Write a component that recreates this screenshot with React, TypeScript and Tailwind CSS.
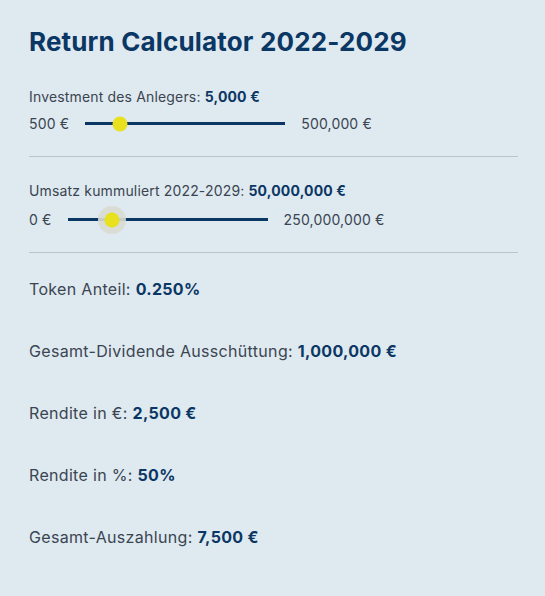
import type { ReactNode } from 'react'

const navy = 'text-[#0b3764]'

function Slider({
  min,
  max,
  trackWidth,
  thumbAt,
  focused,
}: {
  min: string
  max: string
  trackWidth: string
  thumbAt: number
  focused?: boolean
}) {
  return (
    <div className="flex items-center text-[14px] text-[#3a4550]">
      <span>{min}</span>
      <div className={`relative mx-[16px] h-[3px] bg-[#0b3764] ${trackWidth}`}>
        {focused && (
          <span
            className="absolute top-1/2 h-[28px] w-[28px] -translate-x-1/2 -translate-y-1/2 rounded-full bg-[#d8dbd3]/90"
            style={{ left: thumbAt }}
          />
        )}
        <span
          className="absolute top-1/2 h-[15px] w-[15px] -translate-x-1/2 -translate-y-1/2 rounded-full bg-[#e9e11e]"
          style={{ left: thumbAt }}
        />
      </div>
      <span>{max}</span>
    </div>
  )
}

function Result({ label, children }: { label: string; children: ReactNode }) {
  return (
    <p className="text-[16px] leading-[22px] tracking-[0.02em] text-[#3a4550]">
      {label} <b className={`font-bold ${navy}`}>{children}</b>
    </p>
  )
}

export default function App() {
  return (
    <div
      className="min-h-screen bg-[#dfe9f0] pl-[29px] pr-[27px] pt-[24px] tracking-[0.01em]"
      style={{ fontFamily: 'Inter, "Open Sans", sans-serif' }}
    >
      <h1 className={`text-[26px] font-bold leading-[36px] ${navy}`}>Return Calculator 2022-2029</h1>

      <div className="mt-[28px] pb-[22px]">
        <p className="text-[14px] leading-[18px] text-[#3a4550]">
          Investment des Anlegers: <b className={`font-bold ${navy}`}>5,000 €</b>
        </p>
        <div className="mt-[7px]">
          <Slider min="500 €" max="500,000 €" trackWidth="w-[200px]" thumbAt={35} />
        </div>
      </div>
      <hr className="border-[#bcc4ca]" />

      <div className="pt-[25px] pb-[22px]">
        <p className="text-[14px] leading-[18px] text-[#3a4550]">
          Umsatz kummuliert 2022-2029: <b className={`font-bold ${navy}`}>50,000,000 €</b>
        </p>
        <div className="mt-[9px]">
          <Slider min="0 €" max="250,000,000 €" trackWidth="w-[200px]" thumbAt={44} focused />
        </div>
      </div>
      <hr className="border-[#bcc4ca]" />

      <div className="flex flex-col gap-[40px] pt-[25px]">
        <Result label="Token Anteil:">0.250%</Result>
        <Result label="Gesamt-Dividende Ausschüttung:">1,000,000 €</Result>
        <Result label="Rendite in €:">2,500 €</Result>
        <Result label="Rendite in %:">50%</Result>
        <Result label="Gesamt-Auszahlung:">7,500 €</Result>
      </div>
    </div>
  )
}
